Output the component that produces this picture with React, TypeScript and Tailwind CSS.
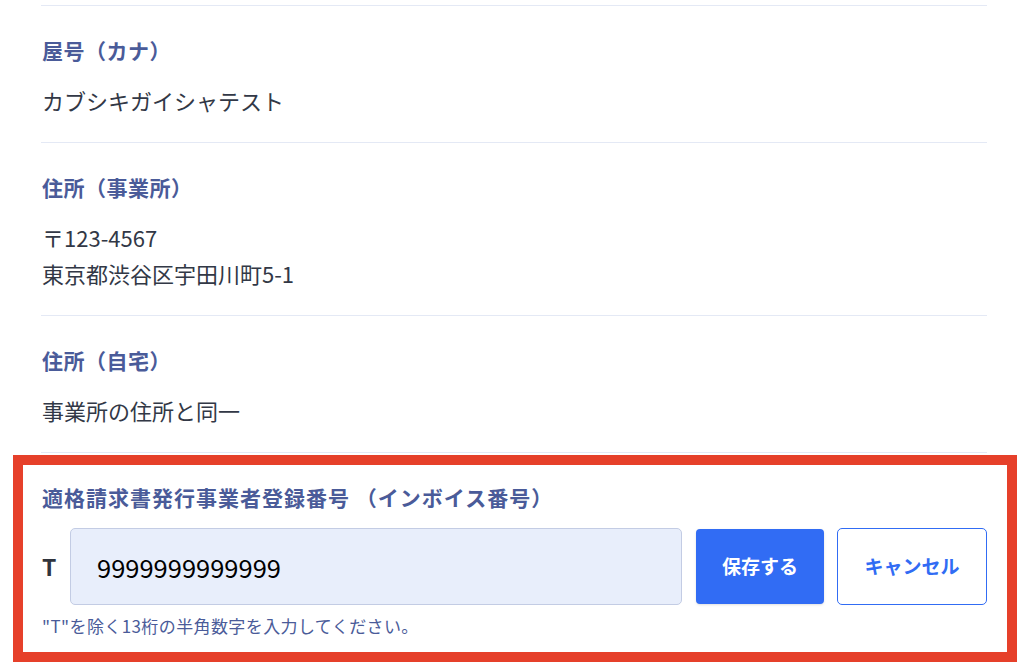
import React, { useState } from "react";

const font = {
  fontFamily: '"Noto Sans CJK JP", "Noto Sans", sans-serif',
};

type Item = {
  label: string;
  lines: string[];
};

const items: Item[] = [
  { label: "屋号（カナ）", lines: ["カブシキガイシャテスト"] },
  { label: "住所（事業所）", lines: ["〒123-4567", "東京都渋谷区宇田川町5-1"] },
  { label: "住所（自宅）", lines: ["事業所の住所と同一"] },
];

const App = () => {
  const [invoice, setInvoice] = useState("9999999999999");

  return (
    <div
      className="w-[1020px] h-[662px] overflow-hidden bg-white pt-[5px]"
      style={font}
    >
      <div className="ml-[41px] w-[946px]">
        {items.map((item) => (
          <div
            key={item.label}
            className="border-t border-[#e4e9f5] pt-[30px] pb-[24px] pl-px"
          >
            <p className="text-[21px] leading-[28px] font-bold tracking-[0.5px] text-[#4a5b99]">
              {item.label}
            </p>
            <div className="mt-[18px]">
              {item.lines.map((line) => (
                <p
                  key={line}
                  className="text-[22px] leading-[36px] text-[#323846]"
                >
                  {line}
                </p>
              ))}
            </div>
          </div>
        ))}
        <div className="border-t border-[#e4e9f5]" />

        {/* インボイス番号 (編集中) */}
        <div className="-ml-[28px] w-[1004px] mt-[2px] border-[10px] border-[#e6402a] pt-[18px] pb-[16px] pl-[19px] pr-[20px]">
          <p className="text-[21px] leading-[28px] font-bold tracking-[1px] text-[#4a5b99]">
            適格請求書発行事業者登録番号 （インボイス番号）
          </p>
          <div className="mt-[17px] flex items-center h-[77px]">
            <span className="w-[28px] text-[23px] font-bold text-[#30343d]">
              T
            </span>
            <input
              value={invoice}
              onChange={(e) => setInvoice(e.target.value)}
              className="h-full w-[612px] rounded-[5px] border border-[#c3cce4] bg-[#e8eefb] pl-[26px] text-[25.5px] text-black outline-none"
              style={font}
            />
            <button className="ml-[14px] h-[75px] w-[128px] rounded-[4px] bg-[#316cf4] text-[19px] font-bold text-white shadow-sm">
              保存する
            </button>
            <button className="ml-[13px] h-full w-[150px] rounded-[5px] border border-[#316cf4] bg-white text-[19px] font-bold text-[#316cf4]">
              キャンセル
            </button>
          </div>
          <p className="mt-[11px] text-[17px] leading-[20px] tracking-[0.4px] text-[#4a5b99]">
            "T"を除く13桁の半角数字を入力してください。
          </p>
        </div>
      </div>
    </div>
  );
};

export default App;
